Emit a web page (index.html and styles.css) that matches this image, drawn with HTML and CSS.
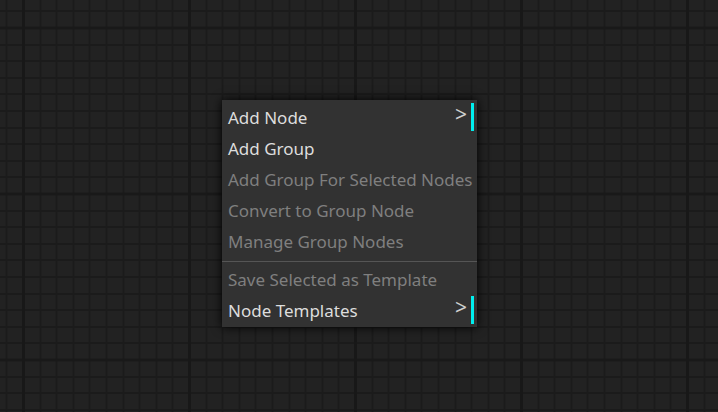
FILE: index.html
```html
<!DOCTYPE html>
<html lang="en">
<head>
<meta charset="utf-8">
<title>Canvas context menu</title>
<link rel="stylesheet" href="styles.css">
</head>
<body>
<main class="canvas">
  <div class="menu" role="menu">
    <div class="entry submenu" role="menuitem">Add Node</div>
    <div class="entry" role="menuitem">Add Group</div>
    <div class="entry disabled" role="menuitem">Add Group For Selected Nodes</div>
    <div class="entry disabled" role="menuitem">Convert to Group Node</div>
    <div class="entry disabled" role="menuitem">Manage Group Nodes</div>
    <div class="separator"></div>
    <div class="entry disabled" role="menuitem">Save Selected as Template</div>
    <div class="entry submenu" role="menuitem">Node Templates</div>
  </div>
</main>
</body>
</html>
```
FILE: styles.css
```css
html, body {
  margin: 0;
  padding: 0;
  height: 100%;
  overflow: hidden;
}

.canvas {
  position: relative;
  width: 100%;
  height: 100%;
  background-color: #222222;
  background-image:
    linear-gradient(to right, #181818 0, #181818 3px, transparent 3px),
    linear-gradient(to bottom, #191919 0, #191919 3px, transparent 3px),
    repeating-linear-gradient(to right, #1b1b1b 0, #1b1b1b 2px, transparent 2px, transparent 16.6px),
    repeating-linear-gradient(to bottom, #1b1b1b 0, #1b1b1b 2px, transparent 2px, transparent 16.6px);
  background-size: 166px 100%, 100% 166px, 166px 100%, 100% 166px;
  background-position: 22px 0, 0 26.5px, 22.5px 0, 0 27px;
  font-family: "Noto Sans", "Open Sans", sans-serif;
}

.menu {
  position: absolute;
  left: 222px;
  top: 100px;
  width: 255px;
  box-sizing: border-box;
  padding: 3px;
  display: flex;
  flex-direction: column;
  gap: 3px;
  background-color: #323232;
  box-shadow: 0 0 10px #000;
  font-size: 17px;
}

.entry {
  position: relative;
  height: 28px;
  padding-left: 3px;
  display: flex;
  align-items: center;
  color: #dddddd;
  white-space: nowrap;
}

.entry.disabled {
  color: #7f7f7f;
}

.entry.submenu {
  border-right: 3px solid #00eeee;
}

.entry.submenu::after {
  content: ">";
  position: absolute;
  right: 4px;
  top: 1px;
  font-size: 21px;
  line-height: 1;
  color: #cfcfcf;
}

.separator {
  height: 0;
  margin: 3px -3px 0;
  border-top: 1px solid #555555;
}
```
